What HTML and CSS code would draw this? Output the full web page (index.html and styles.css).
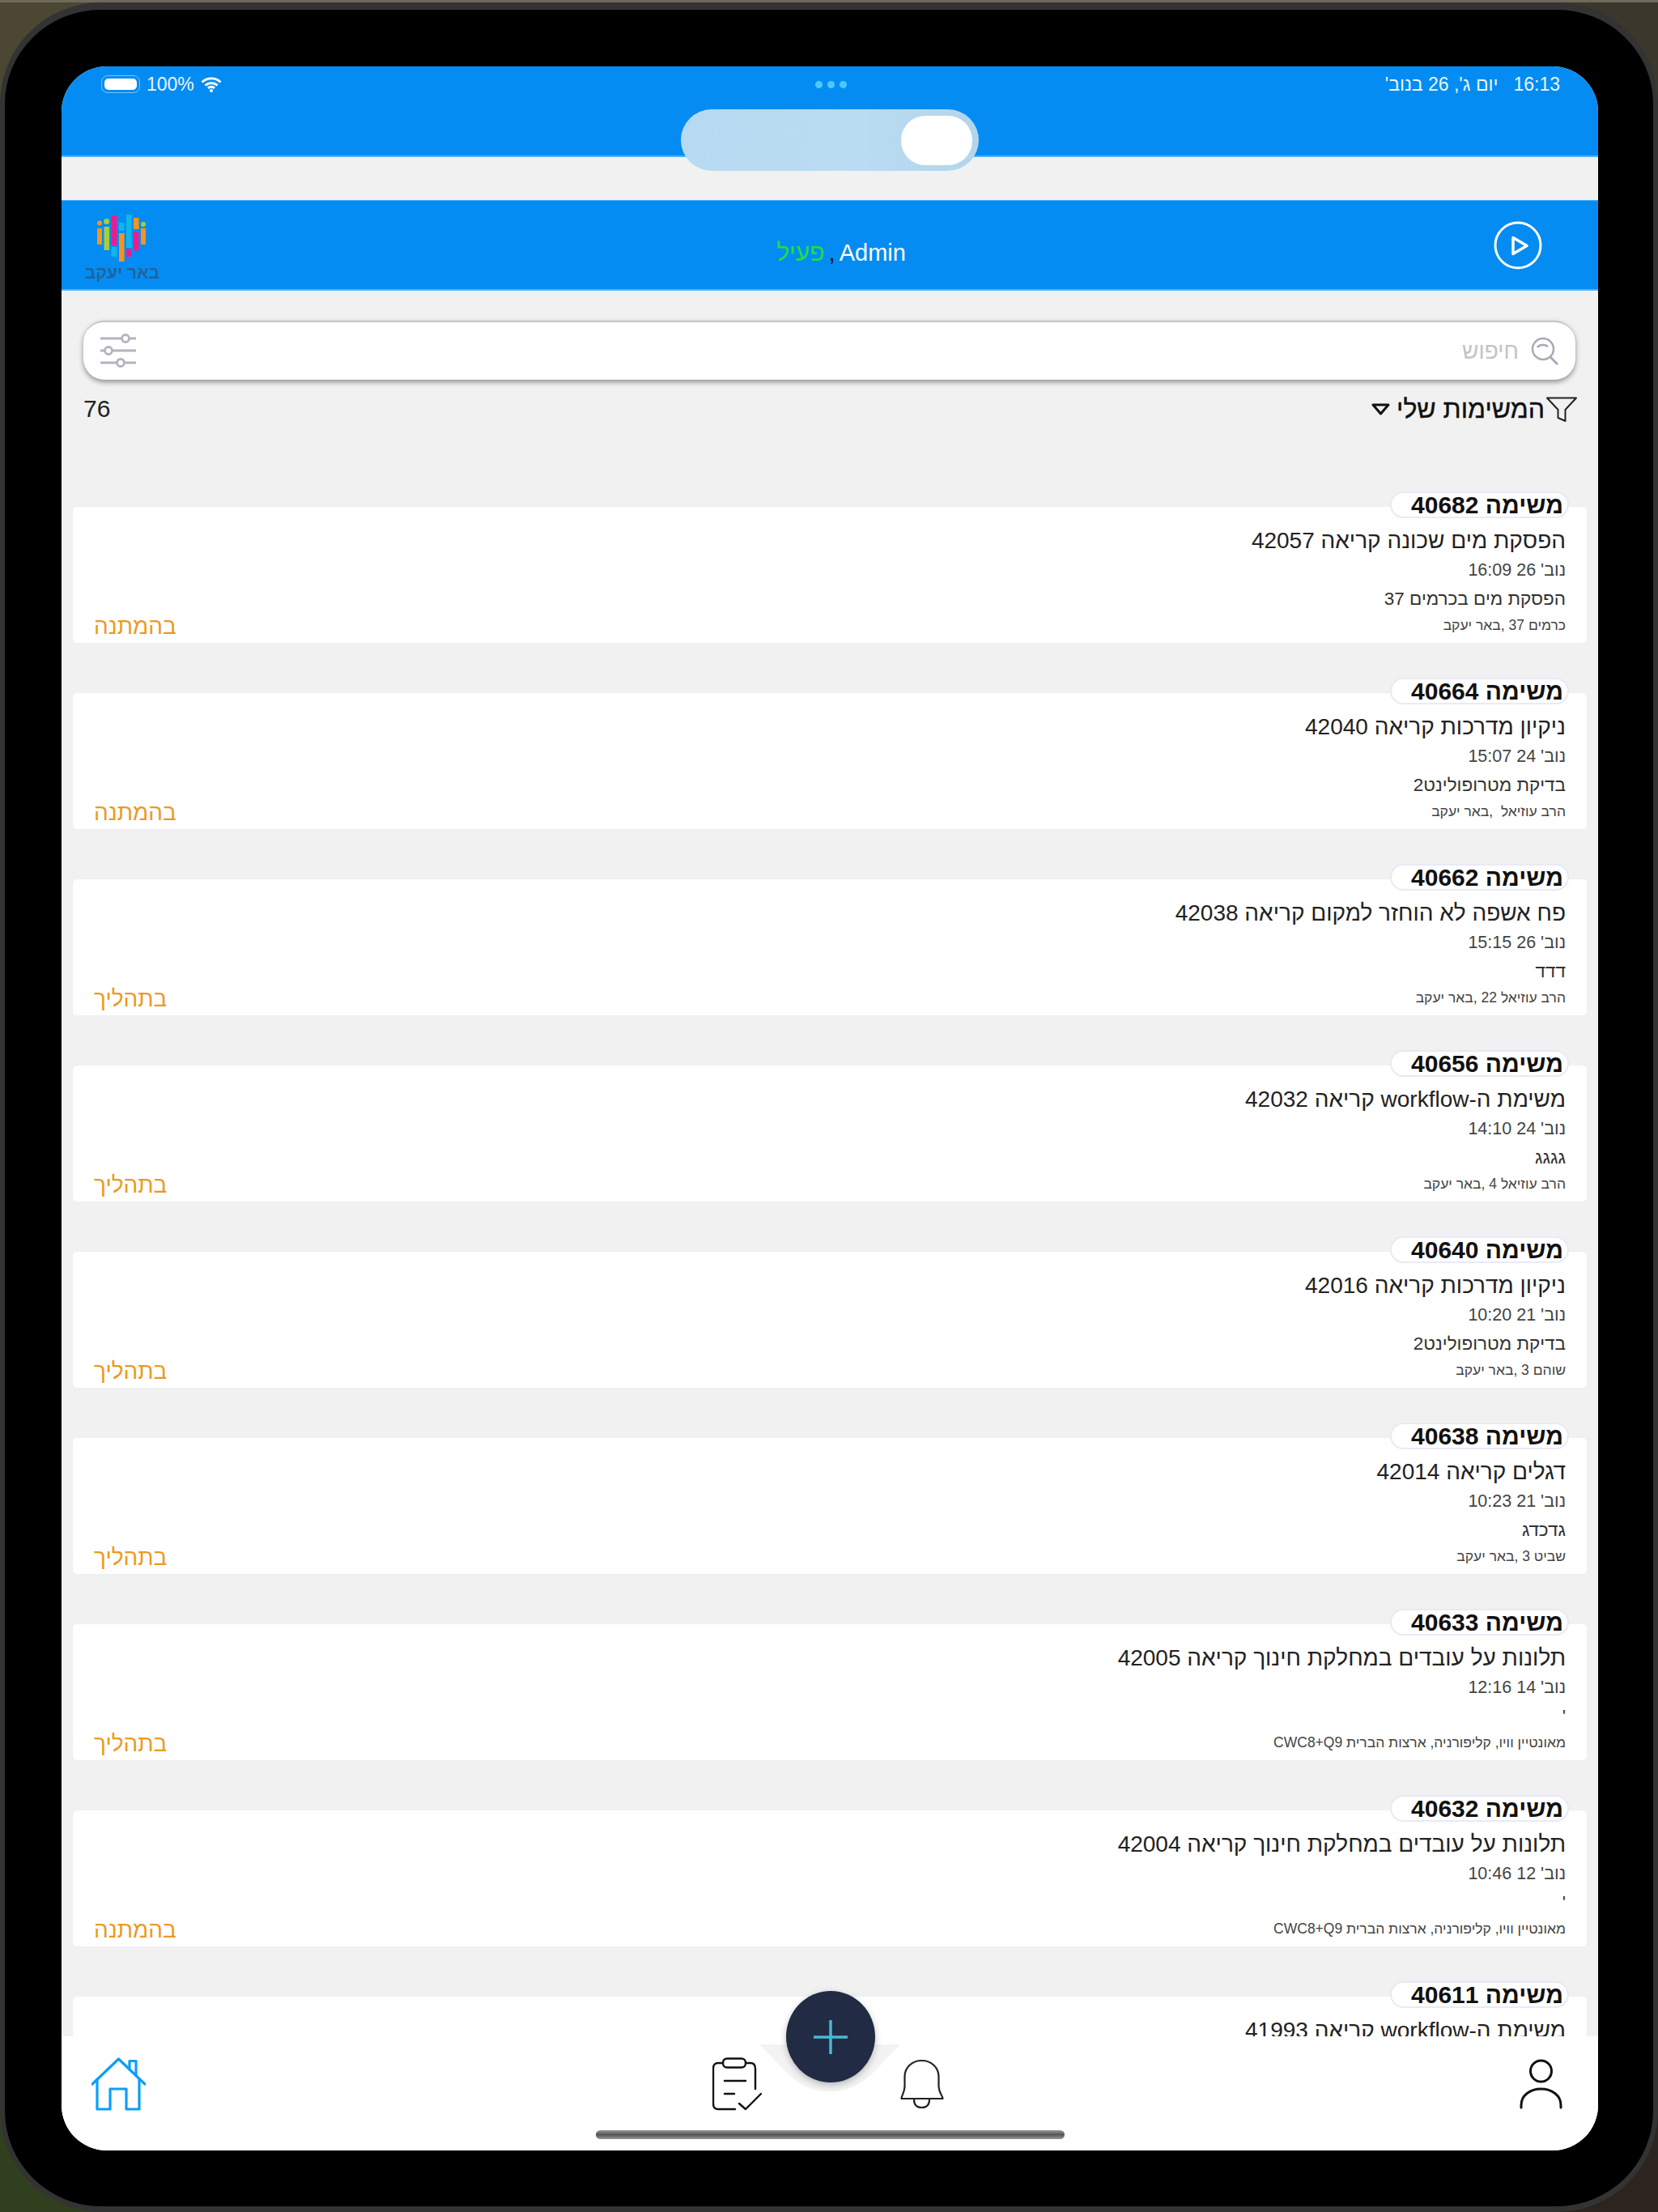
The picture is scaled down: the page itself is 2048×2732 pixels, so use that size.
FILE: index.html
```html
<!DOCTYPE html>
<html lang="he">
<head>
<meta charset="utf-8">
<title>המשימות שלי</title>
<link rel="stylesheet" href="styles.css">
</head>
<body>
<div class="device">
<div class="screen">

<header class="top-bar">
  <div class="status-bar">
    <div class="status-left">
      <span class="battery"><span class="battery-fill"></span></span>
      <span>100%</span>
      <svg class="wifi" width="26" height="20" viewBox="0 0 26 20"><path d="M1.500 7.500a16.500 16.500 0 0 1 23 0M5.500 11.500a11 11 0 0 1 15 0M9 15a5.500 5.500 0 0 1 8 0" fill="none" stroke="#fff" stroke-width="2.800"/><circle cx="13" cy="18" r="2" fill="#fff"/></svg>
    </div>
    <div class="dots"><i></i><i></i><i></i></div>
    <div class="status-right" dir="rtl"><span>16:13</span><span>יום ג', 26 בנוב'</span></div>
  </div>
</header>
<div class="toggle"><span class="knob"></span></div>
<div class="band"></div>

<div class="user-bar">
  <div class="logo">
    <svg width="90" height="64" viewBox="17 14 90 64">
      <rect x="30" y="32" width="6" height="20" fill="#f7931e"/><circle cx="33" cy="25.500" r="3" fill="#f7931e"/>
      <rect x="38.500" y="30" width="6.500" height="29" fill="#a6ce39"/><circle cx="41.700" cy="23.500" r="3.500" fill="#a6ce39"/>
      <rect x="47.500" y="16" width="7" height="37" fill="#ec1c8e"/>
      <rect x="47.500" y="55" width="7" height="12" fill="#12b5ea"/>
      <rect x="57" y="25" width="6.500" height="10" fill="#12b5ea"/>
      <rect x="57" y="38" width="6.500" height="35" fill="#f7931e"/>
      <rect x="66" y="15" width="6.500" height="41" fill="#12b5ea"/>
      <rect x="66" y="57.500" width="6.500" height="9.500" fill="#ec1c8e"/>
      <rect x="75" y="19" width="6.500" height="14" fill="#f7931e"/>
      <rect x="75" y="36.500" width="6.500" height="23" fill="#ec1c8e"/>
      <rect x="84" y="32" width="6" height="20" fill="#f7931e"/><circle cx="87" cy="27" r="3" fill="#a6ce39"/>
    </svg>
    <span class="logo-name" dir="rtl">באר יעקב</span>
  </div>
  <div class="user-name" dir="rtl"><span>Admin</span><b class="comma">,</b><span class="active">פעיל</span></div>
  <svg class="play" width="60" height="62" viewBox="0 0 60 62"><circle cx="30" cy="31" r="28" fill="none" stroke="#fff" stroke-width="3"/><path d="M24 21.500 41 31.500 24 41.500Z" fill="none" stroke="#fff" stroke-width="3.500" stroke-linejoin="round"/></svg>
</div>

<main class="content">
  <div class="search" dir="rtl">
    <svg class="search-icon" width="34" height="35" viewBox="0 0 34 35"><circle cx="15" cy="15" r="13" fill="none" stroke="#a9a9b4" stroke-width="2.500"/><path d="M24 25 33 34" stroke="#a9a9b4" stroke-width="3"/><path d="M8 13a8 6 0 0 1 13 -1" fill="none" stroke="#a9a9b4" stroke-width="2.500"/></svg>
    <span class="placeholder">חיפוש</span>
    <svg class="sliders" width="44" height="44" viewBox="0 0 44 44"><g fill="none" stroke="#b4b4be" stroke-width="2.800"><path d="M0 6H26M36 6H44M0 21H5M15 21H44M0 36H20M30 36H44"/><circle cx="31" cy="6" r="4.500"/><circle cx="10" cy="21" r="4.500"/><circle cx="25" cy="36" r="4.500"/></g></svg>
  </div>

  <div class="filter-row" dir="rtl">
    <svg class="funnel" width="38" height="31" viewBox="0 0 38 31"><path d="M1 1.500H37L23.500 16V30L14.500 26V16Z" fill="none" stroke="#222" stroke-width="2" stroke-linejoin="round"/></svg>
    <span class="filter-name">המשימות שלי</span>
    <svg class="caret" width="23" height="15" viewBox="0 0 23 15"><path d="M2 2H21L11.500 13Z" fill="none" stroke="#111" stroke-width="3" stroke-linejoin="round"/></svg>
    <span class="count">76</span>
  </div>

  <div class="list" dir="rtl">
    <article class="card">
      <span class="badge">משימה 40682</span>
      <div class="title">הפסקת מים שכונה קריאה 42057</div>
      <div class="date">נוב' 26 16:09</div>
      <div class="desc">הפסקת מים בכרמים 37</div>
      <div class="foot"><span class="addr">כרמים 37 ,באר יעקב</span><span class="state">בהמתנה</span></div>
    </article>
    <article class="card">
      <span class="badge">משימה 40664</span>
      <div class="title">ניקיון מדרכות קריאה 42040</div>
      <div class="date">נוב' 24 15:07</div>
      <div class="desc">בדיקת מטרופולינט2</div>
      <div class="foot"><span class="addr">הרב עוזיאל &nbsp;,באר יעקב</span><span class="state">בהמתנה</span></div>
    </article>
    <article class="card">
      <span class="badge">משימה 40662</span>
      <div class="title">פח אשפה לא הוחזר למקום קריאה 42038</div>
      <div class="date">נוב' 26 15:15</div>
      <div class="desc">דדד</div>
      <div class="foot"><span class="addr">הרב עוזיאל 22 ,באר יעקב</span><span class="state">בתהליך</span></div>
    </article>
    <article class="card">
      <span class="badge">משימה 40656</span>
      <div class="title">משימת ה-workflow קריאה 42032</div>
      <div class="date">נוב' 24 14:10</div>
      <div class="desc">גגגג</div>
      <div class="foot"><span class="addr">הרב עוזיאל 4 ,באר יעקב</span><span class="state">בתהליך</span></div>
    </article>
    <article class="card">
      <span class="badge">משימה 40640</span>
      <div class="title">ניקיון מדרכות קריאה 42016</div>
      <div class="date">נוב' 21 10:20</div>
      <div class="desc">בדיקת מטרופולינט2</div>
      <div class="foot"><span class="addr">שוהם 3 ,באר יעקב</span><span class="state">בתהליך</span></div>
    </article>
    <article class="card">
      <span class="badge">משימה 40638</span>
      <div class="title">דגלים קריאה 42014</div>
      <div class="date">נוב' 21 10:23</div>
      <div class="desc">גדכדג</div>
      <div class="foot"><span class="addr">שביט 3 ,באר יעקב</span><span class="state">בתהליך</span></div>
    </article>
    <article class="card">
      <span class="badge">משימה 40633</span>
      <div class="title">תלונות על עובדים במחלקת חינוך קריאה 42005</div>
      <div class="date">נוב' 14 12:16</div>
      <div class="desc">'</div>
      <div class="foot"><span class="addr">מאונטיין וויו, קליפורניה, ארצות הברית CWC8+Q9</span><span class="state">בתהליך</span></div>
    </article>
    <article class="card">
      <span class="badge">משימה 40632</span>
      <div class="title">תלונות על עובדים במחלקת חינוך קריאה 42004</div>
      <div class="date">נוב' 12 10:46</div>
      <div class="desc">'</div>
      <div class="foot"><span class="addr">מאונטיין וויו, קליפורניה, ארצות הברית CWC8+Q9</span><span class="state">בהמתנה</span></div>
    </article>
    <article class="card">
      <span class="badge">משימה 40611</span>
      <div class="title">משימת ה-workflow קריאה 41993</div>
    </article>
  </div>
</main>

<nav class="nav">
  <svg class="notch" width="176" height="58" viewBox="0 0 176 58"><path d="M0 0H176C150 20 135 58 88 58C41 58 26 20 0 0Z" fill="#f3f3f4"/></svg>
  <button class="fab" type="button"><svg width="42" height="42" viewBox="0 0 42 42"><path d="M21 0V42M0 21H42" stroke="#48b9d4" stroke-width="3.500"/></svg></button>
  <svg class="nav-home" width="67" height="66" viewBox="0 0 67 66"><g fill="none" stroke="#0a9ff7" stroke-width="3.200" stroke-linejoin="round" stroke-linecap="round"><path d="M1 33 33.500 2 66 33"/><path d="M47 15V4.500H55V22.500"/><path d="M7 27V64H23V39H43V64H59V27"/></g></svg>
  <div class="nav-center">
    <svg width="61" height="66" viewBox="0 0 61 66"><g fill="none" stroke="#111" stroke-width="2.400" stroke-linecap="round" stroke-linejoin="round"><path d="M13 7H7Q1 7 1 14V57Q1 64 7 64H28"/><path d="M41 7H47Q53 7 53 14V39"/><rect x="13" y="1.500" width="28" height="11" rx="5"/><path d="M15 29H41M15 45H27"/><path d="M33 57 41 64 60 45"/></g></svg>
    <svg width="54" height="66" viewBox="0 0 54 66"><g fill="none" stroke="#222" stroke-width="2.200" stroke-linejoin="round"><path d="M1.500 51C1.500 47 5 45 5.500 36V24C5.500 12 15 4 26.500 4S47.500 12 47.500 24V36C48 45 52.500 47 52.500 51Z"/><path d="M17 52C17 59 21 62 26.500 62S36 59 36 52"/></g></svg>
  </div>
  <svg class="nav-user" width="53" height="66" viewBox="0 0 53 66"><g fill="none" stroke="#111" stroke-width="3"><ellipse cx="26.500" cy="17" rx="13" ry="13"/><path d="M2 62V59C2 47 13 39 26.500 39S51 47 51 59V62" stroke-linecap="round"/></g></svg>
  <span class="home-bar"></span>
</nav>

</div>
</div>
</body>
</html>
```

FILE: styles.css
```css
* { box-sizing: border-box; }

html, body { margin: 0; padding: 0; }

body {
  width: 2048px;
  height: 2732px;
  overflow: hidden;
  padding-top: 3px;
  font-family: "Liberation Sans", Arial, sans-serif;
  background:
    linear-gradient(#6f6a5c, #6f6a5c) top / 100% 3px no-repeat,
    conic-gradient(#3b372c 0 25%, #2c241e 25% 50%, #30401f 50% 75%, #4b4733 75% 100%);
}

.device {
  width: 2048px;
  height: 2729px;
  border-style: solid;
  border-color: #333;
  border-width: 9px 6px 7px;
  border-radius: 125px;
  background: #000;
  padding: 70px 68px 69px 70px;
}

.screen {
  position: relative;
  display: flex;
  flex-direction: column;
  height: 100%;
  border-radius: 56px;
  overflow: hidden;
  background: #f1f1f2;
}

.top-bar {
  flex: 0 0 112px;
  background: #058cf2;
  border-bottom: 2px solid #4fb0f8;
}

.status-bar {
  display: grid;
  grid-template-columns: 1fr auto 1fr;
  align-items: center;
  height: 44px;
  padding: 0 47px 0 49px;
  color: #eaf5ff;
  font-size: 23px;
}

.status-left {
  display: flex;
  align-items: center;
  gap: 8px;
}

.battery {
  display: flex;
  width: 48px;
  height: 22px;
  padding: 3px;
  border: 1.500px solid #7cc4fa;
  border-radius: 8px;
}

.battery-fill {
  flex: 1;
  background: #fff;
  border-radius: 5px;
}

.dots {
  display: flex;
  gap: 6px;
}

.dots i {
  width: 9px;
  height: 9px;
  border-radius: 50%;
  background: #4fc8ff;
}

.status-right {
  display: flex;
  justify-content: flex-start;
  gap: 19px;
}

.toggle {
  position: absolute;
  left: 765px;
  top: 53px;
  display: flex;
  justify-content: flex-end;
  align-items: center;
  width: 368px;
  height: 76px;
  padding-right: 8px;
  border-radius: 38px;
  background: linear-gradient(90deg, #b6daf1, #badcf3 60%, #b3d5ec);
}

.knob {
  width: 88px;
  height: 61px;
  border-radius: 30px;
  background: #fff;
}

.band { flex: 0 0 53px; }

.user-bar {
  flex: 0 0 112px;
  display: grid;
  grid-template-columns: 1fr auto 1fr;
  align-items: center;
  padding: 0 69px 0 31px;
  background: #058cf2;
  border-top: 1px solid #4fb0f8;
  border-bottom: 2px solid #4fb0f8;
}

.logo {
  align-self: start;
  display: flex;
  flex-direction: column;
  align-items: flex-start;
  width: 90px;
  margin-top: 16px;
}

.logo-name {
  width: 90px;
  color: #1f64a0;
  font-size: 21px;
  font-weight: 700;
  line-height: 17px;
  text-align: center;
  white-space: nowrap;
}

.user-name {
  align-self: end;
  margin-left: 66px;
  padding-bottom: 28px;
  color: #fff;
  font-size: 29px;
  line-height: 34px;
}

.comma {
  padding: 0 5px;
  color: #111;
  font-weight: 400;
}

.active {
  color: #1fe03a;
  font-size: 30px;
}

.play { justify-self: end; }

.content {
  flex: 1;
  min-height: 0;
  display: flex;
  flex-direction: column;
  padding-top: 37px;
}

.search {
  flex: 0 0 73px;
  display: flex;
  align-items: center;
  margin: 0 28px 0 27px;
  padding: 0 21px 0 21px;
  border-radius: 26px;
  background: #fff;
  border-top: 2px solid #c4c4c4;
  box-shadow: 0 3px 6px rgba(0, 0, 0, .4);
}

.placeholder {
  flex: 1;
  margin-right: 15px;
  color: #c3c3c8;
  font-size: 28px;
}

.filter-row {
  flex: 0 0 32px;
  display: flex;
  align-items: center;
  margin: 20px 26px 0 27px;
  color: #111;
  font-size: 30px;
  line-height: 32px;
}

.filter-name {
  margin-right: 2px;
  font-size: 32px;
  -webkit-text-stroke: .4px #111;
}

.caret { margin-right: 8px; }

.count {
  margin-right: auto;
  color: #222;
}

.list {
  flex: 1;
  min-height: 0;
  overflow: hidden;
  display: flex;
  flex-direction: column;
  gap: 60px;
  padding: 104px 13px 0;
}

.card {
  flex: 0 0 170px;
  display: flex;
  flex-direction: column;
  align-items: flex-start;
  padding: 0 26px;
  border: 1px solid #eeeef9;
  border-radius: 6px;
  background: #fff;
  color: #222;
}

.badge {
  height: 33px;
  margin: -19px -4px 0 0;
  padding: 0 5px 0 24px;
  border: 2px solid #e9e9f7;
  border-radius: 17px;
  background: #fff;
  color: #111;
  font-size: 30px;
  font-weight: 700;
  line-height: 29px;
  white-space: nowrap;
}

.title {
  margin-top: 12px;
  font-size: 28px;
  line-height: 32px;
}

.date {
  margin-top: 7px;
  color: #444;
  font-size: 21.500px;
  line-height: 26px;
}

.desc {
  margin-top: 10px;
  color: #333;
  font-size: 22.500px;
  line-height: 26px;
}

.foot {
  align-self: stretch;
  display: flex;
  justify-content: space-between;
  align-items: center;
  height: 30px;
  margin-top: 6px;
}

.addr {
  margin-bottom: 3px;
  color: #444;
  font-size: 17.500px;
}

.state {
  color: #ec9a1f;
  font-size: 28px;
}

.nav {
  position: relative;
  z-index: 1;
  flex: 0 0 141px;
  display: grid;
  grid-template-columns: 1fr auto 1fr;
  align-items: start;
  padding: 26px 44px 0 37px;
  background: #fff;
}

.nav-center {
  display: flex;
  gap: 171px;
  padding-left: 3px;
}

.nav-user { justify-self: end; }

.notch {
  position: absolute;
  left: 861px;
  top: 10px;
}

.fab {
  position: absolute;
  left: 895px;
  top: -56px;
  display: flex;
  align-items: center;
  justify-content: center;
  width: 110px;
  height: 113px;
  padding: 0;
  border: 0;
  border-radius: 50%;
  background: #212b43;
  box-shadow: 0 3px 8px rgba(0, 0, 0, .25);
}

.home-bar {
  position: absolute;
  left: 660px;
  top: 116px;
  width: 579px;
  height: 11px;
  border-radius: 6px;
  background: linear-gradient(#999, #555 50%, #999);
}
```
